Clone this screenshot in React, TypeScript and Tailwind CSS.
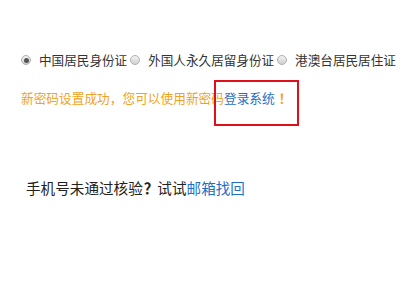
const font = { fontFamily: '"Noto Sans CJK SC", sans-serif' };

function Radio({ checked }: { checked?: boolean }) {
  return (
    <span className="relative inline-flex h-[10px] w-[10px] shrink-0 items-center justify-center rounded-full border border-[#b0b0b0] bg-gradient-to-b from-[#f2f2f2] to-[#d0d0d0]">
      {checked && <span className="h-[5px] w-[5px] rounded-full bg-[#555]" />}
    </span>
  );
}

const options = ['中国居民身份证', '外国人永久居留身份证', '港澳台居民居住证'];

export default function App() {
  return (
    <div lang="zh-CN" className="relative h-[300px] w-[400px] bg-white text-[#333]" style={font}>
      <div className="pl-[21px] pt-[51px]">
        <div className="flex h-[18px] items-center text-[12.6px]">
          {options.map((o, i) => (
            <label key={o} className={`flex items-center ${i > 0 ? 'ml-[3px]' : ''}`}>
              <Radio checked={i === 0} />
              <span className="ml-[8px] leading-[18px]">{o}</span>
            </label>
          ))}
        </div>
        <p className="mt-[20px] text-[12.7px] leading-[18px] text-[#f0a31c]">
          新密码设置成功<span className="inline-block w-[1em]">，</span>您可以使用新密码
          <a className="text-[#1f6fc5]">登录系统</a>
          <span className="inline-block w-[1em] pl-[4px] font-bold">！</span>
        </p>
        <p className="mt-[71px] pl-[5px] text-[14.6px] leading-[20px] text-[#222]">
          手机号未通过核验
          <span className="inline-block w-[1em] pl-[1px] font-bold">？</span>
          试试<a className="text-[#1f6fc5]">邮箱找回</a>
        </p>
      </div>
      <div className="absolute left-[214px] top-[80px] h-[46px] w-[85px] border-2 border-[#e0101a]" />
    </div>
  );
}
